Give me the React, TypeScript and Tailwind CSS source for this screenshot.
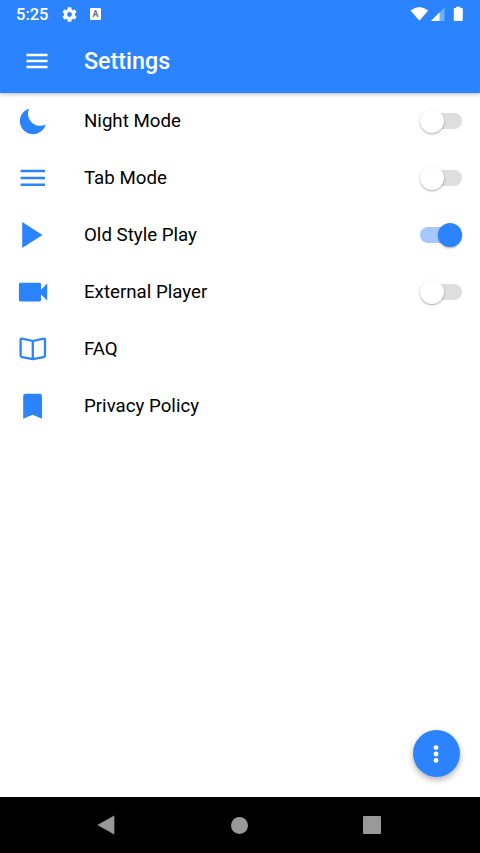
import { useState } from "react";
import type { ReactNode } from "react";

interface Setting {
  label: string;
  icon: ReactNode;
  toggle?: boolean;
  on?: boolean;
}

const settings: Setting[] = [
  {
    label: "Night Mode",
    icon: <path d="M11.2 2.4A13.2 13.2 0 1 0 27.8 18.4A12.1 12.1 0 0 1 11.2 2.4z" fill="currentColor" />,
    toggle: true,
  },
  {
    label: "Tab Mode",
    icon: <path d="M2.6 8h24.4M2.6 15h24.4M2.6 21.8h24.4" stroke="currentColor" strokeWidth="2.5" />,
    toggle: true,
  },
  {
    label: "Old Style Play",
    icon: <path d="M4.2 2L24.5 15L4.2 28z" fill="currentColor" />,
    toggle: true,
    on: true,
  },
  {
    label: "External Player",
    icon: <path d="M2.3 5.8H21.6a1.4 1.4 0 0 1 1.4 1.4V12.8L29.2 6.6V23.4L23 17.4V23a1.4 1.4 0 0 1-1.4 1.4H2.3A1.4 1.4 0 0 1 .9 23V7.2A1.4 1.4 0 0 1 2.3 5.8z" fill="currentColor" />,
    toggle: true,
  },
  {
    label: "FAQ",
    icon: (
      <path
        d="M14.8 7L4 4.6Q2.6 4.4 2.6 5.8V21.6Q2.6 22.9 4 23.1L14.8 25.2L25.6 23.1Q27 22.9 27 21.6V5.8Q27 4.4 25.6 4.6zM14.8 7V25.2"
        fill="none"
        stroke="currentColor"
        strokeWidth="2.3"
        strokeLinejoin="round"
      />
    ),
  },
  {
    label: "Privacy Policy",
    icon: <path d="M5.2 27.7V5.2a2.4 2.4 0 0 1 2.4-2.4H21.6A2.4 2.4 0 0 1 24 5.2V27.7L14.6 23.7z" fill="currentColor" />,
  },
];

function Switch({ on, onClick, label }: { on: boolean; onClick: () => void; label: string }) {
  return (
    <button
      role="switch"
      aria-checked={on}
      aria-label={label}
      onClick={onClick}
      className={`flex h-4 w-[42px] items-center rounded-full ${on ? "justify-end bg-[#a7c8fc]" : "bg-[#dedede]"}`}
    >
      <span
        className={`size-6 shrink-0 rounded-full shadow-[0_1px_2px_rgba(0,0,0,0.35)] ${on ? "bg-[#2b84fd]" : "bg-white"}`}
      />
    </button>
  );
}

function StatusBar() {
  return (
    <div className="flex h-7 items-center pl-4 pr-[17px]">
      <span className="w-[46px] pt-0.5 text-[16.5px] font-medium leading-5">5:25</span>
      <svg viewBox="2 2 20 20" className="size-[15px]" fill="currentColor">
        <path d="M19.14 12.94c.04-.3.06-.61.06-.94s-.02-.64-.07-.94l2.03-1.58a.49.49 0 0 0 .12-.61l-1.92-3.32a.49.49 0 0 0-.59-.22l-2.39.96a7 7 0 0 0-1.62-.94l-.36-2.54a.48.48 0 0 0-.48-.41h-3.84a.48.48 0 0 0-.47.41l-.36 2.54a7 7 0 0 0-1.62.94l-2.39-.96a.48.48 0 0 0-.59.22L2.73 8.87a.48.48 0 0 0 .12.61l2.03 1.58a6 6 0 0 0 0 1.88l-2.03 1.58a.49.49 0 0 0-.12.61l1.92 3.32c.12.22.37.29.59.22l2.39-.96c.5.38 1.03.7 1.62.94l.36 2.54c.05.24.24.41.48.41h3.84c.24 0 .44-.17.47-.41l.36-2.54a7 7 0 0 0 1.62-.94l2.39.96c.22.08.47 0 .59-.22l1.92-3.32a.48.48 0 0 0-.12-.61zM12 15.2a3.2 3.2 0 1 1 0-6.4 3.2 3.2 0 0 1 0 6.4z" />
      </svg>
      <span className="ml-[13px] flex h-3 w-[11px] items-center justify-center rounded-[1px] bg-white text-[9px] font-bold leading-none text-[#66727f]">
        A
      </span>
      <svg viewBox="0 0 53 16" className="ml-auto h-4 w-[53px]" fill="currentColor">
        <path d="M.5 4.4Q9.3-2.6 18.2 4.4L9.4 14.8z" />
        <path d="M34.5 1.5V15H21z" opacity=".35" />
        <path d="M29.5 6.5V15H21z" />
        <path d="M46 2V.8h4.4V2h1.4q1 0 1 1V14q0 1-1 1H44.8q-1 0-1-1V3q0-1 1-1z" />
      </svg>
    </div>
  );
}

export default function App() {
  const [states, setStates] = useState(settings.map((s) => Boolean(s.on)));

  function toggle(index: number) {
    setStates((prev) => prev.map((v, i) => (i === index ? !v : v)));
  }

  return (
    <div className="flex h-[853px] w-[480px] flex-col overflow-hidden bg-white font-['Roboto',sans-serif]">
      <header className="z-10 h-[93px] shrink-0 bg-[#2b84fd] text-white shadow-[0_1px_4px_rgba(0,0,0,0.3)]">
        <StatusBar />
        <div className="flex h-[65px] items-center pl-[26px]">
          <button aria-label="Menu" className="w-[58px]">
            <svg viewBox="0 0 22 16" className="h-4 w-[22px]" stroke="currentColor" strokeWidth="2.3">
              <path d="M.5 2h21M.5 8h21M.5 14h21" />
            </svg>
          </button>
          <h1 className="text-[23.3px] font-medium leading-7">Settings</h1>
        </div>
      </header>

      <main className="relative -mt-px flex-1">
        <ul>
          {settings.map((s, i) => (
            <li key={s.label} className="flex h-[57.15px] items-center px-[18px]">
              <svg viewBox="0 0 30 30" className="size-[30px] text-[#2b84fd]">
                {s.icon}
              </svg>
              <span className="ml-9 flex-1 text-[18.7px] leading-6 text-black">{s.label}</span>
              {s.toggle && <Switch on={states[i]} onClick={() => toggle(i)} label={s.label} />}
            </li>
          ))}
        </ul>
        <button
          aria-label="More"
          className="absolute bottom-5 right-[20.5px] flex size-[47px] items-center justify-center rounded-full bg-[#2b84fd] text-white shadow-[0_3px_6px_rgba(0,0,0,0.3)]"
        >
          <svg viewBox="0 0 6 20" className="h-5 w-1.5" fill="currentColor">
            <circle cx="3" cy="3.6" r="2.4" />
            <circle cx="3" cy="10" r="2.4" />
            <circle cx="3" cy="16.4" r="2.4" />
          </svg>
        </button>
      </main>

      <nav className="flex h-14 shrink-0 items-center justify-between bg-black pl-[97px] pr-[98.6px] text-[#999]">
        <svg viewBox="0 0 18 20" className="h-5 w-[18px]" fill="currentColor">
          <path d="M.8 10L17 .9V19.1z" stroke="currentColor" strokeLinejoin="round" strokeWidth=".6" />
        </svg>
        <span className="size-[17px] rounded-full bg-[#999]" />
        <span className="size-[18px] rounded-[1px] bg-[#999]" />
      </nav>
    </div>
  );
}
